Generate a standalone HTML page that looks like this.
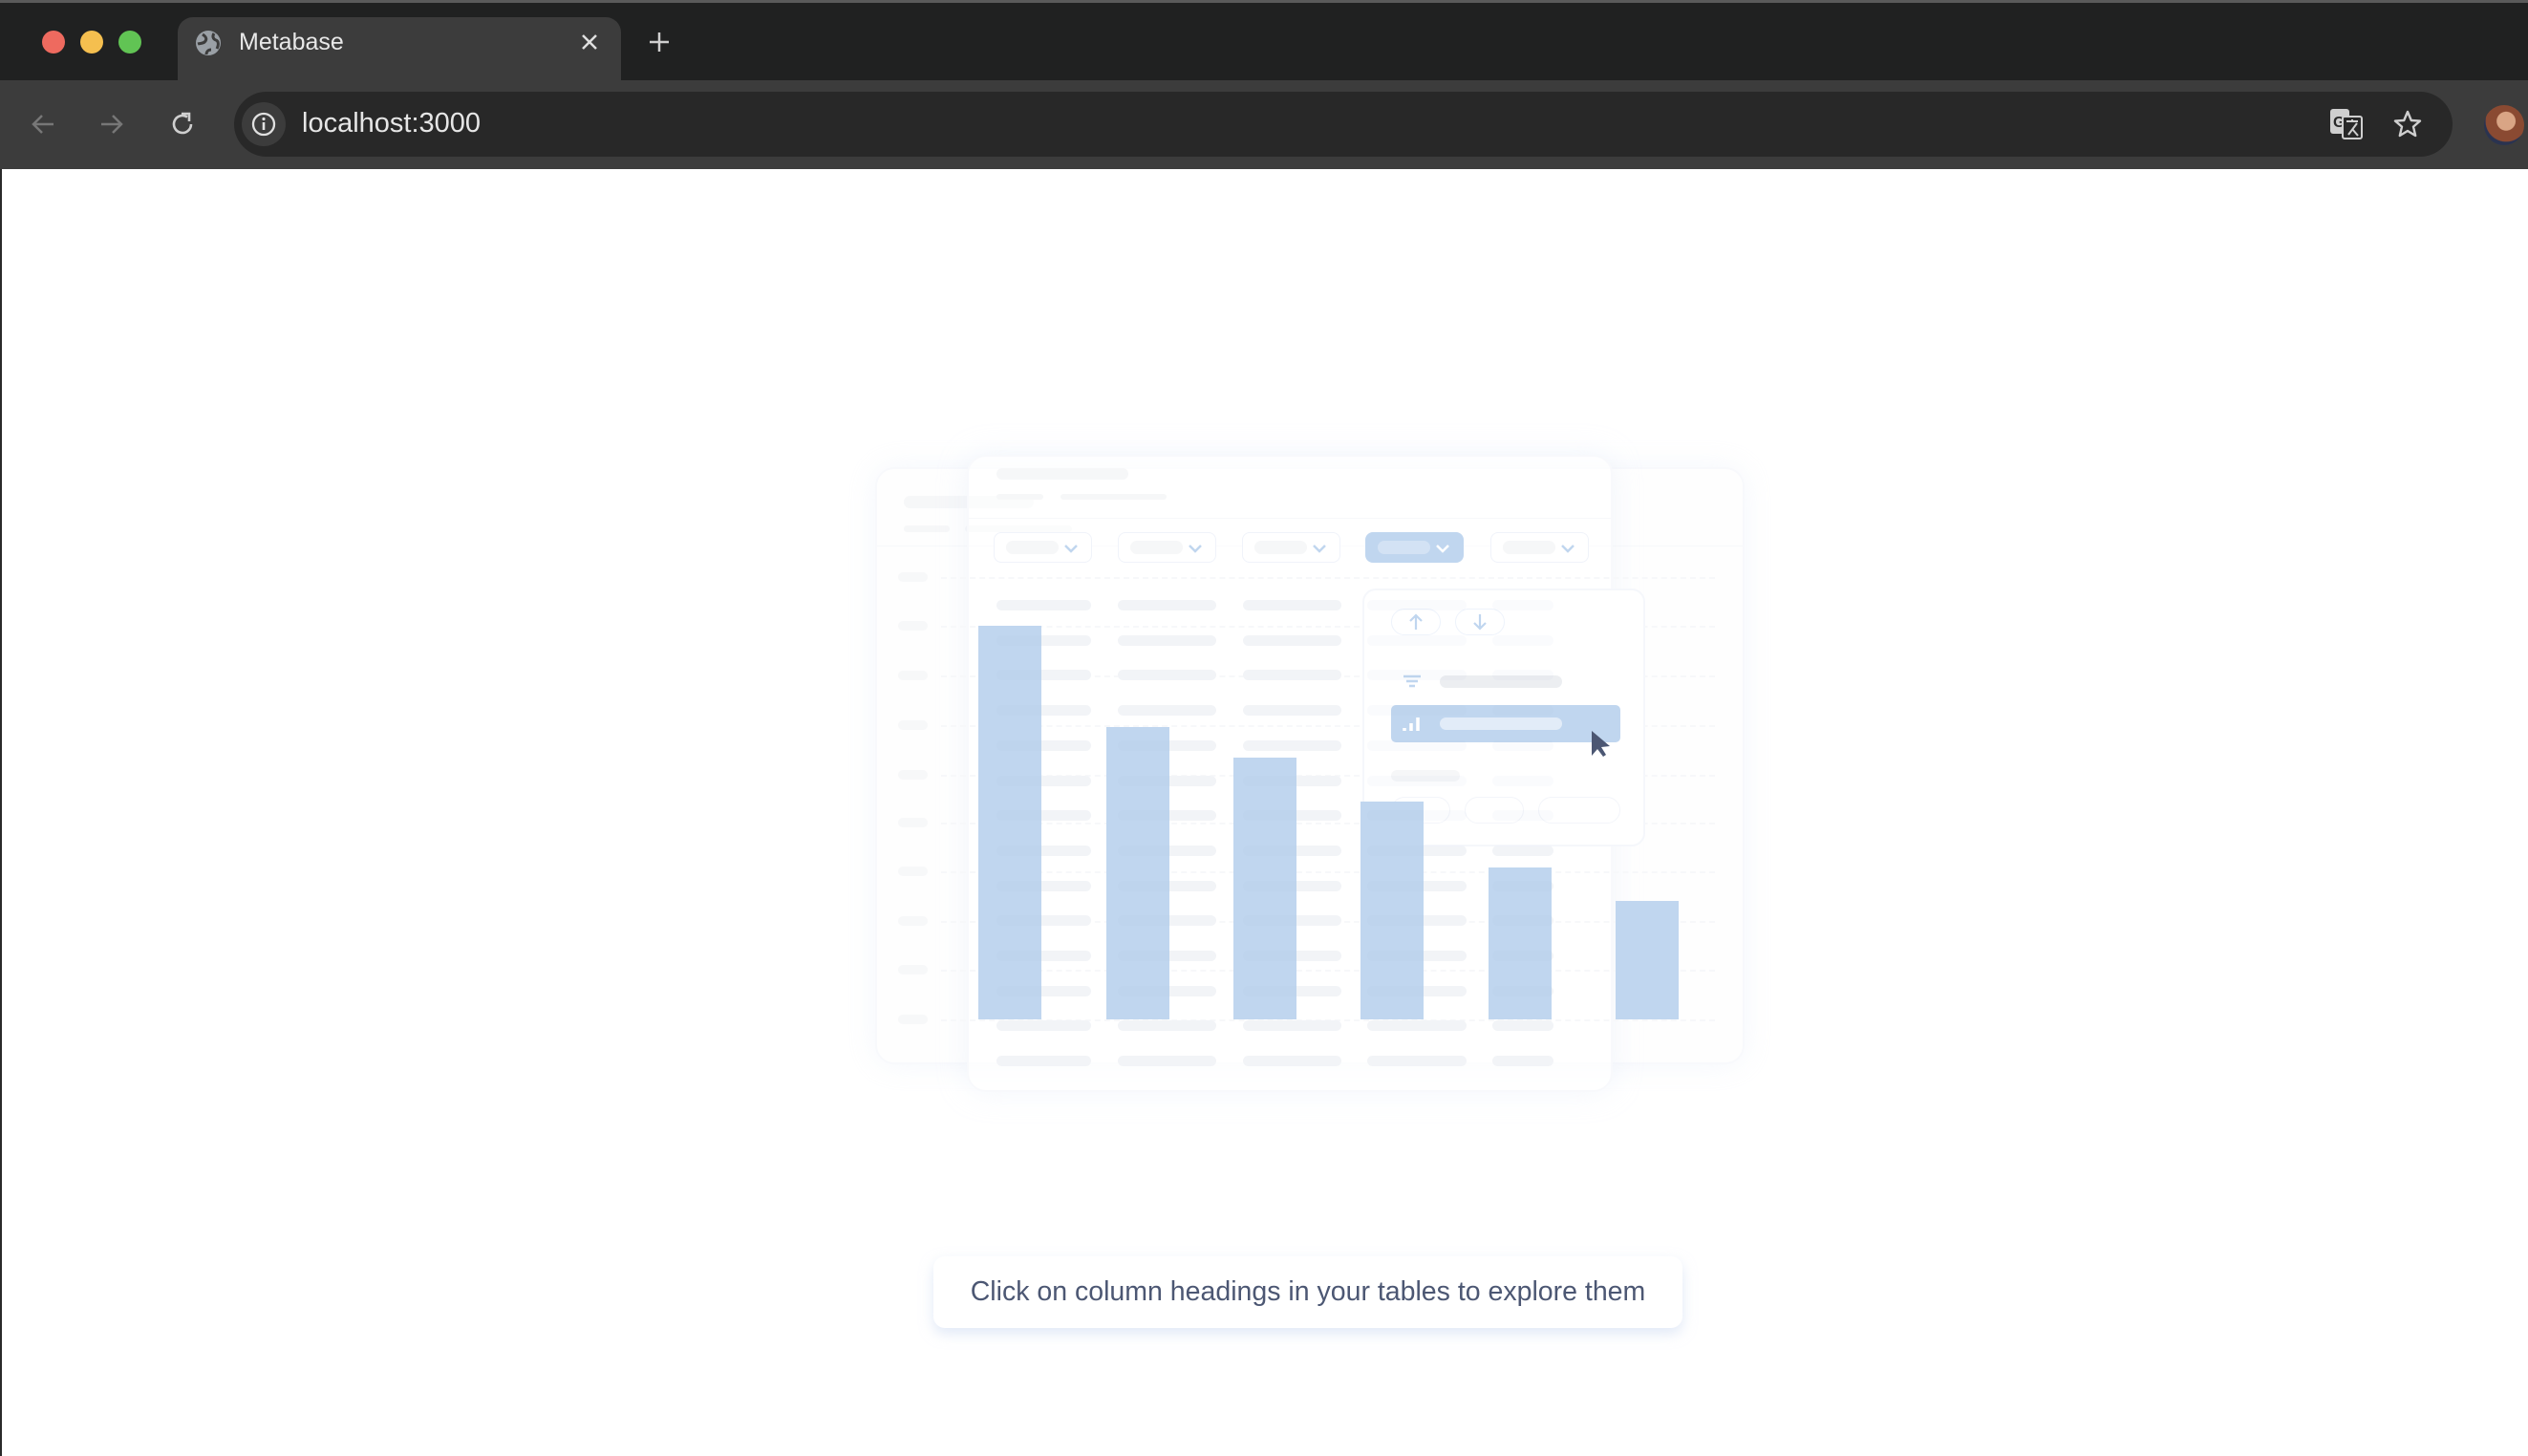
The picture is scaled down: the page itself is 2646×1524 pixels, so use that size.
<!DOCTYPE html>
<html><head><meta charset="utf-8">
<style>
*{margin:0;padding:0;box-sizing:border-box}
html,body{width:2646px;height:1524px;overflow:hidden;background:#fff;font-family:"Liberation Sans",sans-serif}
.a{position:absolute}
#tabs{left:0;top:0;width:2646px;height:84px;background:#202121;border-top:3px solid #5a5a5a}
#tb{left:0;top:84px;width:2646px;height:93px;background:#3c3c3c}
.dot{width:24px;height:24px;border-radius:50%;top:32px}
.pill{border-radius:8px;background:#f6f7f8}
.chip{top:557px;width:103px;height:32px;border:1.5px solid #f0f3fa;border-radius:8px;background:#fff}
.chip .p{position:absolute;left:12px;top:8px;width:55px;height:14px;border-radius:7px;background:#f6f7f8}
.chip svg{position:absolute;right:12px;top:9px}
.bar{background:#c0d6ef;width:66px}
.gl{height:0;border-top:2px dashed #f7f8fa;left:985px;width:810px}
</style></head><body>
<div class="a" style="left:0;top:177px;width:2px;height:1347px;background:#2a2a2a"></div>
<div id="tabs" class="a"></div>
<div class="a dot" style="left:44px;background:#ee6a5f"></div>
<div class="a dot" style="left:84px;background:#f5bf4f"></div>
<div class="a dot" style="left:124px;background:#61c454"></div>
<div class="a" style="left:186px;top:18px;width:464px;height:80px;background:#3c3c3c;border-radius:16px 16px 0 0"></div>
<svg class="a" style="left:204px;top:31px" width="28" height="28" viewBox="0 0 28 28"><circle cx="14" cy="14" r="13" fill="#9aa0a6"/><path d="M8 5c3 2 5 4 3 7s-5 2-8 3M20 4c-2 3-1 6 2 7s3 5 1 9M12 26c0-3 2-5 5-5" stroke="#3c3c3c" stroke-width="3" fill="none"/></svg>
<div class="a" style="left:250px;top:30px;font-size:25px;color:#e8e8e8">Metabase</div>
<svg class="a" style="left:607px;top:34px" width="20" height="20"><path d="M3 3L17 17M17 3L3 17" stroke="#e0e0e0" stroke-width="2.5"/></svg>
<svg class="a" style="left:678px;top:32px" width="24" height="24"><path d="M12 2V22M2 12H22" stroke="#cfcfcf" stroke-width="2.5"/></svg>
<div id="tb" class="a"></div>
<svg class="a" style="left:30px;top:116px" width="30" height="28"><path d="M26 14H5M14 5L5 14L14 23" stroke="#777" stroke-width="2.5" fill="none"/></svg>
<svg class="a" style="left:102px;top:116px" width="30" height="28"><path d="M4 14H25M16 5L25 14L16 23" stroke="#777" stroke-width="2.5" fill="none"/></svg>
<svg class="a" style="left:176px;top:115px" width="30" height="30"><path d="M24 15A9 9 0 1 1 20 7.5" stroke="#cfcfcf" stroke-width="2.6" fill="none"/><path d="M14 4H22V12" stroke="#cfcfcf" stroke-width="2.6" fill="none"/></svg>
<div class="a" style="left:245px;top:96px;width:2322px;height:68px;background:#282828;border-radius:34px"></div>
<div class="a" style="left:253px;top:107px;width:46px;height:46px;background:#3c3c3c;border-radius:50%"></div>
<svg class="a" style="left:262px;top:116px" width="28" height="28"><circle cx="14" cy="14" r="11" stroke="#e0e0e0" stroke-width="2.3" fill="none"/><path d="M14 12V20" stroke="#e0e0e0" stroke-width="2.6"/><circle cx="14" cy="8.5" r="1.6" fill="#e0e0e0"/></svg>
<div class="a" style="left:316px;top:113px;font-size:29px;color:#e6e6e6">localhost:3000</div>
<svg class="a" style="left:2438px;top:113px" width="36" height="34"><rect x="1" y="1" width="20" height="26" rx="3" fill="#cfcfcf"/><text x="4" y="20" font-size="16" font-weight="bold" fill="#282828" font-family="Liberation Sans">G</text><rect x="14" y="9" width="20" height="23" rx="2" fill="#282828" stroke="#cfcfcf" stroke-width="2"/><path d="M18 14H30M24 12V15M20 28L29 16M24 22L30 29" stroke="#cfcfcf" stroke-width="2" fill="none"/></svg>
<svg class="a" style="left:2504px;top:114px" width="32" height="32"><path d="M16 3L19.8 12 29 12.6 22 18.6 24.2 28 16 23 7.8 28 10 18.6 3 12.6 12.2 12Z" stroke="#cfcfcf" stroke-width="2.4" fill="none" stroke-linejoin="round"/></svg>
<div class="a" style="left:2600px;top:110px;width:42px;height:42px;border-radius:50%;background:radial-gradient(circle at 55% 40%,#d9a585 0 28%,#8a4a32 30% 62%,#2a3350 64%)"></div>

<!-- illustration -->
<div class="a" style="left:916px;top:489px;width:910px;height:625px;border:2px solid #f8f9fc;border-radius:20px;background:#fefefe;box-shadow:0 0 30px rgba(220,230,245,.3)"></div>
<div class="a pill" style="left:946px;top:519px;width:136px;height:13px"></div>
<div class="a pill" style="left:946px;top:550px;width:48px;height:7px"></div>
<div class="a pill" style="left:1010px;top:550px;width:112px;height:7px"></div>
<div class="a" style="left:918px;top:571px;width:906px;height:1px;background:#f7f8fa"></div>
<div class="a" style="left:1012px;top:476px;width:676px;height:667px;border:2px solid #f8f9fc;border-radius:20px;background:rgba(255,255,255,.6);box-shadow:0 0 30px rgba(220,230,245,.35)"></div>
<div class="a pill" style="left:1043px;top:490px;width:138px;height:12px"></div>
<div class="a pill" style="left:1043px;top:517px;width:49px;height:6px"></div>
<div class="a pill" style="left:1110px;top:517px;width:111px;height:6px"></div>
<div class="a" style="left:1014px;top:542px;width:672px;height:1px;background:#f7f8fa"></div>
<div id="gen"></div>
<div class="a chip" style="left:1040px"><div class="p"></div><svg width="18" height="14"><path d="M3 4L9 10L15 4" stroke="#c0d6ef" stroke-width="2.5" fill="none"/></svg></div>
<div class="a chip" style="left:1170px"><div class="p"></div><svg width="18" height="14"><path d="M3 4L9 10L15 4" stroke="#c0d6ef" stroke-width="2.5" fill="none"/></svg></div>
<div class="a chip" style="left:1300px"><div class="p"></div><svg width="18" height="14"><path d="M3 4L9 10L15 4" stroke="#c0d6ef" stroke-width="2.5" fill="none"/></svg></div>
<div class="a chip" style="left:1429px;background:#c0d6ef;border-color:#c0d6ef"><div class="p" style="background:#d3e2f4"></div><svg width="18" height="14"><path d="M3 4L9 10L15 4" stroke="#fff" stroke-width="2.5" fill="none"/></svg></div>
<div class="a chip" style="left:1560px"><div class="p"></div><svg width="18" height="14"><path d="M3 4L9 10L15 4" stroke="#c0d6ef" stroke-width="2.5" fill="none"/></svg></div>

<!-- popover -->
<div class="a" style="left:1426px;top:616px;width:296px;height:270px;border:2px solid #f5f7fb;border-radius:14px;background:rgba(255,255,255,.92)"></div>
<div class="a" style="left:1456px;top:637px;width:52px;height:28px;border:1.5px solid #eef3fb;border-radius:14px"></div>
<div class="a" style="left:1523px;top:637px;width:52px;height:28px;border:1.5px solid #eef3fb;border-radius:14px"></div>
<svg class="a" style="left:1472px;top:640px" width="20" height="22"><path d="M10 19V4M4 10L10 4L16 10" stroke="#c0d6ef" stroke-width="2.2" fill="none"/></svg>
<svg class="a" style="left:1539px;top:640px" width="20" height="22"><path d="M10 3V18M4 12L10 18L16 12" stroke="#c0d6ef" stroke-width="2.2" fill="none"/></svg>
<svg class="a" style="left:1468px;top:706px" width="20" height="16"><path d="M1 2H19M4 7H16M7 12H13" stroke="#c0d6ef" stroke-width="2.6"/></svg>
<div class="a" style="left:1507px;top:707px;width:128px;height:13px;border-radius:7px;background:#eceef1"></div>
<div class="a" style="left:1456px;top:738px;width:240px;height:39px;border-radius:5px;background:#c0d6ef"></div>
<svg class="a" style="left:1468px;top:749px" width="20" height="18"><path d="M2 16V13M9 16V8M16 16V2" stroke="#fff" stroke-width="3.5"/></svg>
<div class="a" style="left:1507px;top:751px;width:128px;height:13px;border-radius:7px;background:#e2ecf8"></div>
<svg class="a" style="left:1663px;top:763px" width="26" height="32"><path d="M3 2L3 28L9 21L15 29L18 27L13 19L22 18Z" fill="#4c5773"/></svg>
<div class="a pill" style="left:1456px;top:806px;width:72px;height:12px"></div>
<div class="a" style="left:1456px;top:834px;width:62px;height:28px;border:1.5px solid #f3f5fa;border-radius:14px"></div>
<div class="a" style="left:1533px;top:834px;width:62px;height:28px;border:1.5px solid #f3f5fa;border-radius:14px"></div>
<div class="a" style="left:1610px;top:834px;width:86px;height:28px;border:1.5px solid #f3f5fa;border-radius:14px"></div>

<div class="a bar" style="left:1024px;top:655px;height:412px"></div>
<div class="a bar" style="left:1158px;top:761px;height:306px"></div>
<div class="a bar" style="left:1291px;top:793px;height:274px"></div>
<div class="a bar" style="left:1424px;top:839px;height:228px"></div>
<div class="a bar" style="left:1558px;top:908px;height:159px"></div>
<div class="a bar" style="left:1691px;top:943px;height:124px"></div>
<div id="gen2"></div>

<div class="a" style="left:977px;top:1315px;width:784px;height:75px;background:#fff;border-radius:12px;box-shadow:0 6px 14px rgba(200,215,240,.55);font-size:28.5px;color:#4c5773;text-align:center;line-height:75px">Click on column headings in your tables to explore them</div>
<script>
var g=document.getElementById('gen'),h='';
var ys=[604,655,707,759,811,861,912,964,1015,1067];
ys.forEach(function(y){h+='<div class="a gl" style="top:'+y+'px"></div><div class="a pill" style="left:940px;top:'+(y-5)+'px;width:31px;height:10px;background:#f7f8f9"></div>';});
var cols=[[1043,99],[1170,103],[1301,103],[1431,104],[1562,64]];
for(var r=0;r<14;r++){var y=628+r*36.7;cols.forEach(function(c){h+='<div class="a pill" style="left:'+c[0]+'px;top:'+y+'px;width:'+c[1]+'px;height:11px;background:#f7f8f9"></div>';});}
g.innerHTML=h;
var g2=document.getElementById('gen2'),h2='';
for(var r=0;r<14;r++){var y=628+r*36.7;cols.forEach(function(c){h2+='<div class="a pill" style="left:'+c[0]+'px;top:'+y+'px;width:'+c[1]+'px;height:11px;background:rgba(160,180,210,.05)"></div>';});}
g2.innerHTML=h2;
</script>
</body></html>
